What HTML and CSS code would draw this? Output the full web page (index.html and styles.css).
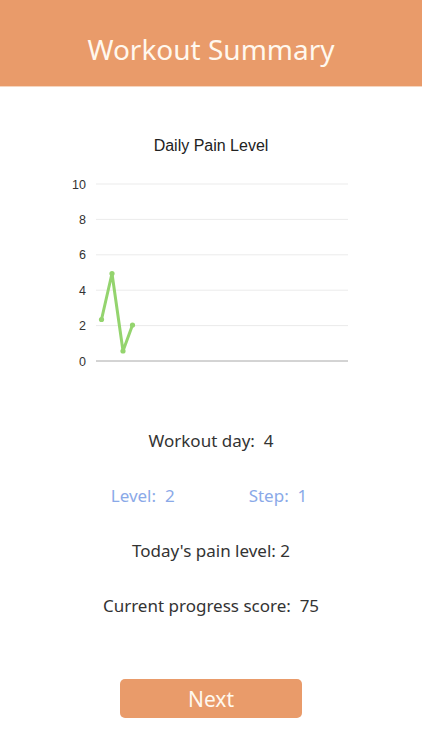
FILE: index.html
```html
<!DOCTYPE html>
<html lang="en">
<head>
    <meta charset="UTF-8">
    <meta name="viewport" content="width=device-width, initial-scale=1.0">
    <title>Workout Summary</title>
    <link rel="stylesheet" href="styles.css">
</head>
<body>
    <header class="top-bar">
        <h1>Workout Summary</h1>
    </header>

    <section class="chart">
        <h2>Daily Pain Level</h2>
        <svg class="chart-svg" width="422" height="200" viewBox="0 0 422 200">
            <g class="grid">
                <line x1="96" y1="14" x2="348" y2="14"/>
                <line x1="96" y1="49.4" x2="348" y2="49.4"/>
                <line x1="96" y1="84.8" x2="348" y2="84.8"/>
                <line x1="96" y1="120.2" x2="348" y2="120.2"/>
                <line x1="96" y1="155.6" x2="348" y2="155.6"/>
            </g>
            <line class="axis" x1="96" y1="191" x2="348" y2="191"/>
            <g class="labels">
                <text x="86" y="18.5">10</text>
                <text x="86" y="53.9">8</text>
                <text x="86" y="89.3">6</text>
                <text x="86" y="124.7">4</text>
                <text x="86" y="160.1">2</text>
                <text x="86" y="195.5">0</text>
            </g>
            <polyline class="series" points="101.5,149.5 112,103.5 123,181 132.5,155"/>
            <g class="dots">
                <circle cx="101.5" cy="149.5" r="2.6"/>
                <circle cx="112" cy="103.5" r="2.6"/>
                <circle cx="123" cy="181" r="2.6"/>
                <circle cx="132.5" cy="155" r="2.6"/>
            </g>
        </svg>
    </section>

    <section class="summary">
        <p>Workout day:&nbsp; 4</p>
        <div class="level-row">
            <span>Level:&nbsp; 2</span>
            <span>Step:&nbsp; 1</span>
        </div>
        <p>Today's pain level: 2</p>
        <p>Current progress score:&nbsp; 75</p>
    </section>

    <div class="actions">
        <button class="next-btn">Next</button>
    </div>
</body>
</html>
```

FILE: styles.css
```css
body {
    margin: 0;
    font-family: 'Noto Sans', sans-serif;
    background-color: #fff;
    color: #333;
}

.top-bar {
    height: 86px;
    background-color: #e99b6a;
    border-bottom: 1px solid #f6d6bf;
    display: flex;
    align-items: center;
    justify-content: center;
}

.top-bar h1 {
    margin: 0;
    padding-top: 12px;
    font-size: 28px;
    font-weight: 400;
    color: #fff8ee;
}

.chart {
    margin-top: 49px;
}

.chart h2 {
    margin: 0;
    text-align: center;
    font-family: 'Liberation Sans', sans-serif;
    font-size: 16px;
    font-weight: 400;
    line-height: 19px;
    color: #222;
}

.chart-svg {
    display: block;
    margin-top: 15px;
}

.grid line {
    stroke: #ebebeb;
    stroke-width: 1;
}

.axis {
    stroke: #a8a8a8;
    stroke-width: 1;
}

.labels text {
    font-family: 'Liberation Sans', sans-serif;
    font-size: 12.5px;
    fill: #333;
    text-anchor: end;
}

.series {
    fill: none;
    stroke: #94d46e;
    stroke-width: 3;
    stroke-linejoin: round;
}

.dots circle {
    fill: #94d46e;
}

.summary {
    margin-top: 59px;
    display: flex;
    flex-direction: column;
    gap: 31px;
    text-align: center;
    font-size: 17px;
    line-height: 24px;
}

.summary p {
    margin: 0;
}

.level-row {
    display: flex;
    justify-content: center;
    gap: 74px;
    padding-right: 4px;
    color: #8aa9e8;
}

.actions {
    margin-top: 61px;
    display: flex;
    justify-content: center;
}

.next-btn {
    width: 182px;
    height: 39px;
    background-color: #e99b6a;
    color: #fff8ee;
    border: none;
    border-radius: 5px;
    font-family: 'Noto Sans', sans-serif;
    font-size: 21px;
    padding: 0;
}
```
